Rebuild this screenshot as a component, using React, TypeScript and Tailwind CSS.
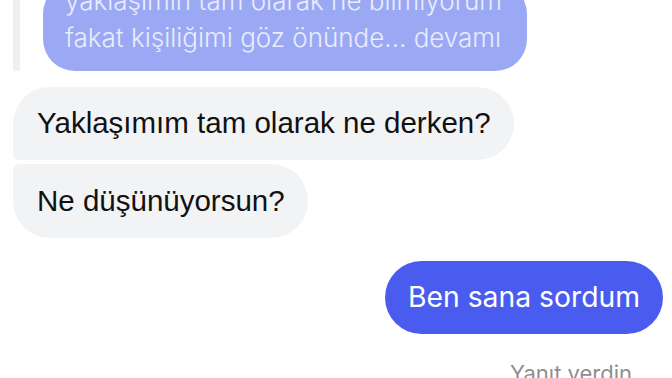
import React from "react";

export default function App() {
  return (
    <div className="w-[672px] h-[378px] overflow-hidden bg-white relative" style={{ fontFamily: '"Liberation Sans", Arial, sans-serif' }}>
      <div className="flex flex-row items-stretch mt-[-18px]">
        <div className="w-[7px] ml-[13px] bg-[#eeeff1] rounded-b-[3px]" />
        <div
          className="ml-[23px] w-[484px] bg-[#9ba9f5] rounded-[32px] pl-[22px] pr-[20px] pt-[0px] pb-[15px] text-[#e9ecfd] text-[26px] leading-[37px]"
          style={{ fontFamily: 'Inter, "Noto Sans", sans-serif', fontWeight: 300 }}
        >
          <div className="whitespace-nowrap">yaklaşımın tam olarak ne bilmiyorum</div>
          <div className="whitespace-nowrap">fakat kişiliğimi göz önünde... devamı</div>
        </div>
      </div>
      <div className="flex flex-col items-start mt-[16px] ml-[13px] gap-[4px]">
        <div className="bg-[#f2f3f5] rounded-[37px] rounded-bl-[6px] pl-[24px] pr-[23px] h-[73px] flex items-center text-[29.5px] text-[#111]">
          Yaklaşımım tam olarak ne derken?
        </div>
        <div className="bg-[#f2f3f5] rounded-[37px] rounded-tl-[6px] pl-[24px] pr-[23px] h-[74px] flex items-center text-[29.5px] text-[#111]">
          Ne düşünüyorsun?
        </div>
      </div>
      <div className="flex flex-col items-end mt-[23px] mr-[9px]">
        <div
          className="bg-[#4a5cf0] rounded-[37px] pl-[23px] pr-[23px] h-[73px] flex items-center text-[28.3px] text-white"
          style={{ fontFamily: 'Inter, "Noto Sans", sans-serif' }}
        >
          Ben sana sordum
        </div>
        <div
          className="mt-[26px] mr-[31px] text-[22px] leading-[26px] text-[#8e8e93]"
          style={{ fontFamily: 'Inter, "Noto Sans", sans-serif' }}
        >
          Yanıt verdin
        </div>
      </div>
    </div>
  );
}
